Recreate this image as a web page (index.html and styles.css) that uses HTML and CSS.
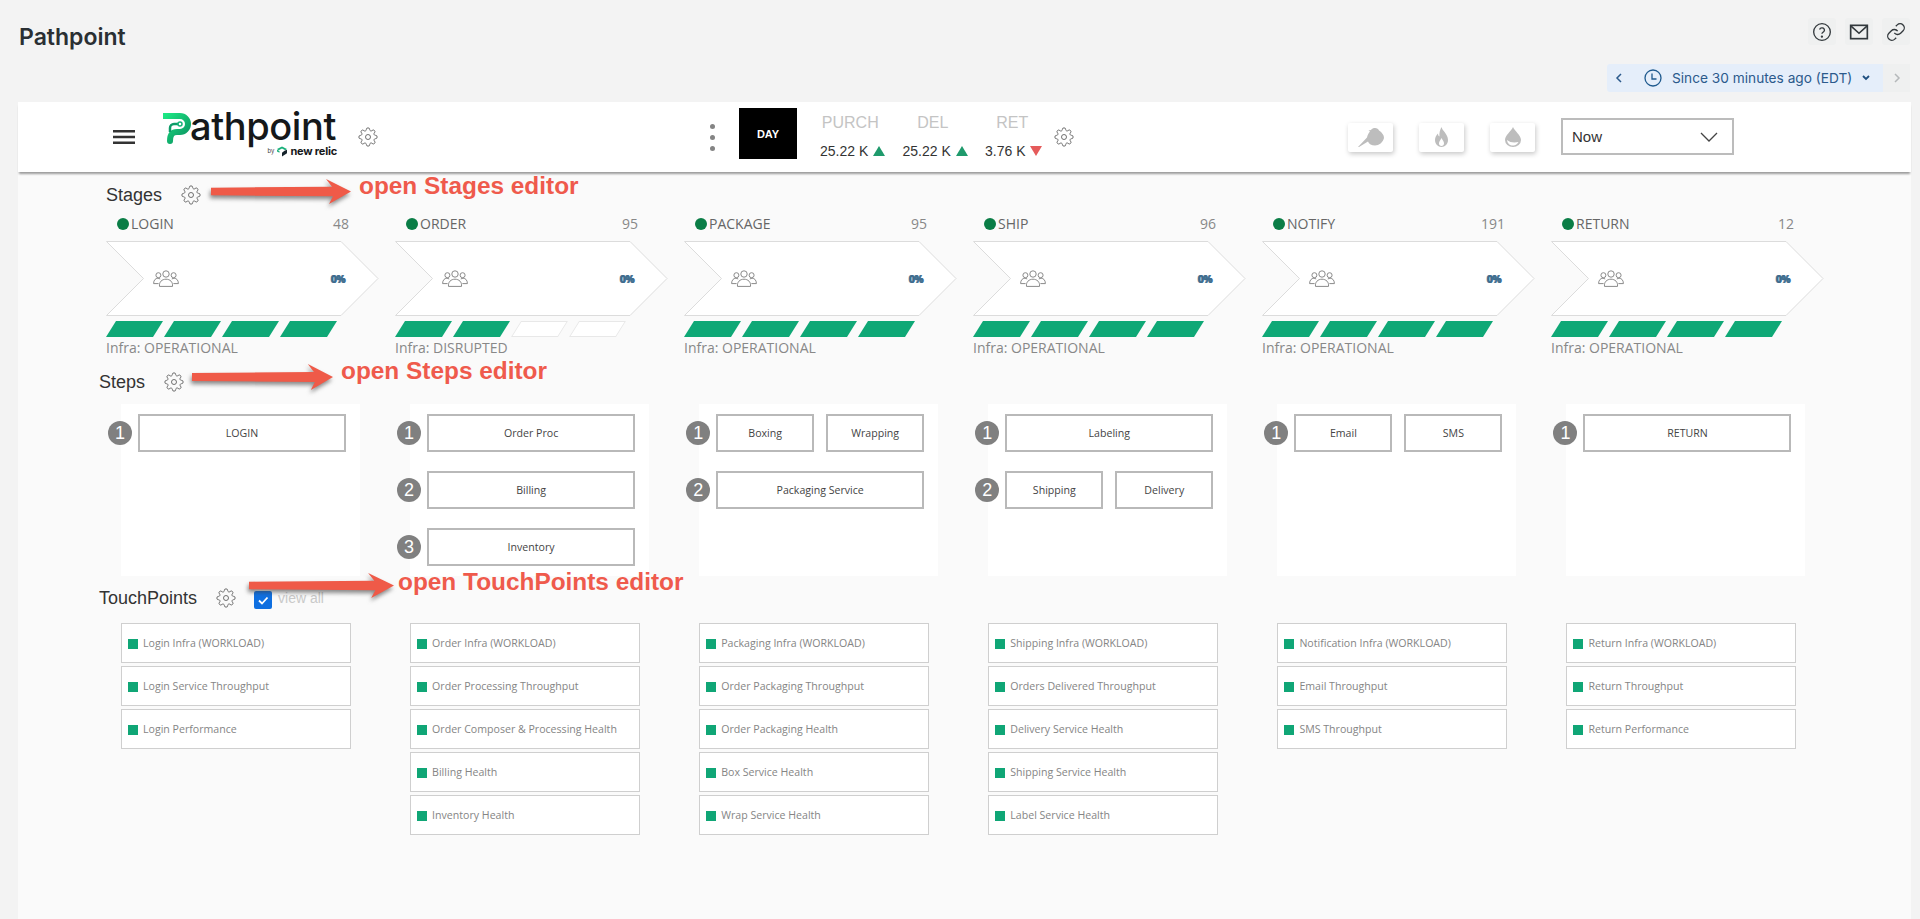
FILE: index.html
```html
<!DOCTYPE html>
<html lang="en">
<head>
<meta charset="utf-8">
<title>Pathpoint</title>
<link rel="stylesheet" href="styles.css">
</head>
<body>
<svg class="defs" width="0" height="0" aria-hidden="true">
  <symbol id="gear" viewBox="0 0 24 24"><circle cx="12" cy="12" r="3"/><path d="M19.4 15a1.65 1.65 0 0 0 .33 1.82l.06.06a2 2 0 0 1 0 2.83 2 2 0 0 1-2.83 0l-.06-.06a1.65 1.65 0 0 0-1.82-.33 1.65 1.65 0 0 0-1 1.51V21a2 2 0 0 1-2 2 2 2 0 0 1-2-2v-.09A1.65 1.65 0 0 0 9 19.4a1.65 1.65 0 0 0-1.82.33l-.06.06a2 2 0 0 1-2.83 0 2 2 0 0 1 0-2.83l.06-.06a1.65 1.65 0 0 0 .33-1.82 1.65 1.65 0 0 0-1.51-1H3a2 2 0 0 1-2-2 2 2 0 0 1 2-2h.09A1.65 1.65 0 0 0 4.6 9a1.65 1.65 0 0 0-.33-1.82l-.06-.06a2 2 0 0 1 0-2.83 2 2 0 0 1 2.83 0l.06.06a1.65 1.65 0 0 0 1.82.33H9a1.65 1.65 0 0 0 1-1.51V3a2 2 0 0 1 2-2 2 2 0 0 1 2 2v.09a1.65 1.65 0 0 0 1 1.51 1.65 1.65 0 0 0 1.82-.33l.06-.06a2 2 0 0 1 2.83 0 2 2 0 0 1 0 2.83l-.06.06a1.65 1.65 0 0 0-.33 1.82V9a1.65 1.65 0 0 0 1.51 1H21a2 2 0 0 1 2 2 2 2 0 0 1-2 2h-.09a1.65 1.65 0 0 0-1.51 1z"/></symbol>
  <symbol id="users" viewBox="0 0 26 17"><circle cx="13" cy="4" r="3.2"/><path d="M6.5 16.4c-.6-4.4 2.4-7.2 6.5-7.2s7.100 2.800 6.500 7.200z"/><circle cx="5.400" cy="5.200" r="2.500"/><path d="M7.200 9c-1-.5-1.600-.7-2.400-.7C2.600 8.300.6 10 .6 13.600h5"/><circle cx="20.600" cy="5.200" r="2.500"/><path d="M18.800 9c1-.5 1.600-.7 2.400-.7 2.200 0 4.200 1.700 4.200 5.300h-5"/></symbol>
  <symbol id="arrow" viewBox="0 0 140 26" preserveAspectRatio="none"><polygon points="0,9 121,8 115,0 140,13 118,26 122,18 0,17"/></symbol>
  <symbol id="chev" viewBox="0 0 273 75"><polygon points="0.500,0.500 235,0.500 272,37.500 235,74.500 0.500,74.500 37.500,37.500"/></symbol>
</svg>

<header class="top">
  <h1 class="title">Pathpoint</h1>
  <div class="top-right">
    <div class="actions">
      <span class="act"><svg class="ic-act" viewBox="0 0 24 24"><circle cx="12" cy="12" r="10"/><path d="M9.090 9a3 3 0 0 1 5.830 1c0 2-3 2.500-3 4"/><circle class="dot-fill" cx="11.900" cy="17.500" r=".6"/></svg></span>
      <span class="act"><svg class="ic-act ic-mail" viewBox="0 0 24 24"><rect x="2" y="4" width="20" height="16"/><path d="M2.500 5l9.500 8.500L21.500 5"/></svg></span>
      <span class="act"><svg class="ic-act ic-link" viewBox="0 0 24 24"><path d="M10 13a5 5 0 0 0 7.540.54l3-3a5 5 0 0 0-7.070-7.070l-1.720 1.710"/><path d="M14 11a5 5 0 0 0-7.540-.54l-3 3a5 5 0 0 0 7.070 7.070l1.710-1.710"/></svg></span>
    </div>
    <div class="time">
      <div class="time-main">
        <svg class="ic-chev-l" viewBox="0 0 8 12"><path d="M6 2L2 6l4 4"/></svg>
        <svg class="ic-clock" viewBox="0 0 18 18"><circle cx="9" cy="9" r="8"/><path d="M8 4.500V10h4.500"/></svg>
        <span class="time-text">Since 30 minutes ago (EDT)</span>
        <svg class="ic-chev-d" viewBox="0 0 10 8"><path d="M2 2l3 3 3-3"/></svg>
      </div>
      <div class="time-next"><svg class="ic-chev-r" viewBox="0 0 8 12"><path d="M2 2l4 4-4 4"/></svg></div>
    </div>
  </div>
</header>

<main class="panel">
  <section class="bar">
    <svg class="ic-burger" viewBox="0 0 22 14"><path d="M0 1.300h22M0 7h22M0 12.700h22"/></svg>
    <div class="logo">
      <div class="logo-main">
        <svg class="logo-mark" viewBox="0 0 28 32">
          <defs><linearGradient id="lg" x1="0" y1="0" x2="1" y2="1"><stop offset="0" stop-color="#1ce783"/><stop offset="1" stop-color="#0b8f60"/></linearGradient></defs>
          <path class="mark-stroke" d="M1 4h16a8 8 0 0 1 0 16h-3c-5 0-7 3-7 9"/>
          <path class="mark-thin" d="M7 20v-4a4 4 0 0 1 4-4h5"/>
          <circle class="mark-dot" cx="17" cy="12" r="2"/>
        </svg>
        <span class="logo-text">athpoint</span>
      </div>
      <div class="logo-sub">
        <span class="logo-by">by</span>
        <svg class="nr-mark" viewBox="0 0 12 12"><path class="nr-g" d="M0 3l6-3 6 3-2 1.500L6 2.500 2 4.500z"/><path class="nr-g" d="M0 4l3 1.500v2L0 6z"/><path class="nr-d" d="M9 5l3-1v4l-6 4V7.500z"/></svg>
        <span class="logo-nr">new relic</span>
      </div>
    </div>
    <svg class="gear gear-logo"><use href="#gear"/></svg>
    <div class="dots"><i></i><i></i><i></i></div>
    <div class="day">DAY</div>
    <div class="kpis">
      <div class="kpi"><div class="kpi-name">PURCH</div><div class="kpi-val">25.22 K<span class="tri up"></span></div></div>
      <div class="kpi"><div class="kpi-name">DEL</div><div class="kpi-val">25.22 K<span class="tri up"></span></div></div>
      <div class="kpi kpi-last"><div class="kpi-name">RET</div><div class="kpi-val">3.76 K<span class="tri down"></span></div></div>
    </div>
    <svg class="gear gear-kpi"><use href="#gear"/></svg>
    <div class="filters">
      <span class="fbtn"><svg class="ic-bird" viewBox="0 0 26 20"><path d="M0 20L9 10.500c.5-2.500 1.500-4.500 3-6L10.500 3.500 13 3c1-1.500 2.500-2 4-2 2 0 3.500 1 4 2.500 3 2 5 4.500 5 7.500-1 4.500-5 7.500-9 7.500-3.500 0-6-1.500-7-4L1 20z"/></svg></span>
      <span class="fbtn"><svg class="ic-flame" viewBox="0 0 13 20"><path fill-rule="evenodd" d="M6.500 0C7 3.500 13 7 13 13c0 4-3 7-6.500 7S0 17 0 13c0-3 1.500-5 3-6.500C3 8 3.500 9 4.500 9.500 4 6 5 3 6.500 0zm0 11C5.500 13 4 14.500 4 16.500 4 18 5 19 6.500 19S9 18 9 16.500C9 14.500 7.500 13 6.500 11z"/></svg></span>
      <span class="fbtn"><svg class="ic-drop" viewBox="0 0 16 20"><path fill-rule="evenodd" d="M8 0c1.500 4 8 8 8 13a8 7 0 0 1-16 0C0 8 6.500 4 8 0zM2 13c.5 4 3.500 6 7 5.500 2-.5 3.500-1.500 4.500-3.500-4.500 1-8.500.5-11.500-2z"/></svg></span>
      <div class="select"><span>Now</span><svg class="ic-select" viewBox="0 0 18 10"><path d="M1 1l8 8 8-8"/></svg></div>
    </div>
  </section>

  <section class="head head-stages">
    <h2 class="head-label">Stages</h2>
    <svg class="gear gear-head"><use href="#gear"/></svg>
  </section>

  <section class="stages">
    <div class="stage">
      <div class="stage-top"><span class="stage-name"><i class="status"></i>LOGIN</span><span class="stage-count">48</span></div>
      <div class="chev"><svg class="chev-bg"><use href="#chev"/></svg><svg class="ic-users"><use href="#users"/></svg><span class="pct">0%</span></div>
      <div class="bars"><i class="seg"></i><i class="seg"></i><i class="seg"></i><i class="seg"></i></div>
      <div class="infra">Infra: OPERATIONAL</div>
    </div>
    <div class="stage">
      <div class="stage-top"><span class="stage-name"><i class="status"></i>ORDER</span><span class="stage-count">95</span></div>
      <div class="chev"><svg class="chev-bg"><use href="#chev"/></svg><svg class="ic-users"><use href="#users"/></svg><span class="pct">0%</span></div>
      <div class="bars"><i class="seg"></i><i class="seg"></i><i class="seg off"></i><i class="seg off"></i></div>
      <div class="infra">Infra: DISRUPTED</div>
    </div>
    <div class="stage">
      <div class="stage-top"><span class="stage-name"><i class="status"></i>PACKAGE</span><span class="stage-count">95</span></div>
      <div class="chev"><svg class="chev-bg"><use href="#chev"/></svg><svg class="ic-users"><use href="#users"/></svg><span class="pct">0%</span></div>
      <div class="bars"><i class="seg"></i><i class="seg"></i><i class="seg"></i><i class="seg"></i></div>
      <div class="infra">Infra: OPERATIONAL</div>
    </div>
    <div class="stage">
      <div class="stage-top"><span class="stage-name"><i class="status"></i>SHIP</span><span class="stage-count">96</span></div>
      <div class="chev"><svg class="chev-bg"><use href="#chev"/></svg><svg class="ic-users"><use href="#users"/></svg><span class="pct">0%</span></div>
      <div class="bars"><i class="seg"></i><i class="seg"></i><i class="seg"></i><i class="seg"></i></div>
      <div class="infra">Infra: OPERATIONAL</div>
    </div>
    <div class="stage">
      <div class="stage-top"><span class="stage-name"><i class="status"></i>NOTIFY</span><span class="stage-count">191</span></div>
      <div class="chev"><svg class="chev-bg"><use href="#chev"/></svg><svg class="ic-users"><use href="#users"/></svg><span class="pct">0%</span></div>
      <div class="bars"><i class="seg"></i><i class="seg"></i><i class="seg"></i><i class="seg"></i></div>
      <div class="infra">Infra: OPERATIONAL</div>
    </div>
    <div class="stage">
      <div class="stage-top"><span class="stage-name"><i class="status"></i>RETURN</span><span class="stage-count">12</span></div>
      <div class="chev"><svg class="chev-bg"><use href="#chev"/></svg><svg class="ic-users"><use href="#users"/></svg><span class="pct">0%</span></div>
      <div class="bars"><i class="seg"></i><i class="seg"></i><i class="seg"></i><i class="seg"></i></div>
      <div class="infra">Infra: OPERATIONAL</div>
    </div>
  </section>

  <section class="head head-steps">
    <h2 class="head-label">Steps</h2>
    <svg class="gear gear-head"><use href="#gear"/></svg>
  </section>

  <section class="steps">
    <div class="step-col">
      <div class="step-row"><span class="badge">1</span><div class="boxes"><div class="box">LOGIN</div></div></div>
    </div>
    <div class="step-col">
      <div class="step-row"><span class="badge">1</span><div class="boxes"><div class="box">Order Proc</div></div></div>
      <div class="step-row"><span class="badge">2</span><div class="boxes"><div class="box">Billing</div></div></div>
      <div class="step-row"><span class="badge">3</span><div class="boxes"><div class="box">Inventory</div></div></div>
    </div>
    <div class="step-col">
      <div class="step-row"><span class="badge">1</span><div class="boxes"><div class="box">Boxing</div><div class="box">Wrapping</div></div></div>
      <div class="step-row"><span class="badge">2</span><div class="boxes"><div class="box">Packaging Service</div></div></div>
    </div>
    <div class="step-col">
      <div class="step-row"><span class="badge">1</span><div class="boxes"><div class="box">Labeling</div></div></div>
      <div class="step-row"><span class="badge">2</span><div class="boxes"><div class="box">Shipping</div><div class="box">Delivery</div></div></div>
    </div>
    <div class="step-col">
      <div class="step-row"><span class="badge">1</span><div class="boxes"><div class="box">Email</div><div class="box">SMS</div></div></div>
    </div>
    <div class="step-col">
      <div class="step-row"><span class="badge">1</span><div class="boxes"><div class="box">RETURN</div></div></div>
    </div>
  </section>

  <section class="head head-tp">
    <h2 class="head-label">TouchPoints</h2>
    <svg class="gear gear-head gear-tp"><use href="#gear"/></svg>
    <span class="check"><svg viewBox="0 0 18 18"><path d="M5 9.500l3 3 5.500-6"/></svg></span>
    <span class="view-all">view all</span>
  </section>

  <section class="tps">
    <ul class="tp-col">
      <li class="tp">Login Infra (WORKLOAD)</li>
      <li class="tp">Login Service Throughput</li>
      <li class="tp">Login Performance</li>
    </ul>
    <ul class="tp-col">
      <li class="tp">Order Infra (WORKLOAD)</li>
      <li class="tp">Order Processing Throughput</li>
      <li class="tp">Order Composer &amp; Processing Health</li>
      <li class="tp">Billing Health</li>
      <li class="tp">Inventory Health</li>
    </ul>
    <ul class="tp-col">
      <li class="tp">Packaging Infra (WORKLOAD)</li>
      <li class="tp">Order Packaging Throughput</li>
      <li class="tp">Order Packaging Health</li>
      <li class="tp">Box Service Health</li>
      <li class="tp">Wrap Service Health</li>
    </ul>
    <ul class="tp-col">
      <li class="tp">Shipping Infra (WORKLOAD)</li>
      <li class="tp">Orders Delivered Throughput</li>
      <li class="tp">Delivery Service Health</li>
      <li class="tp">Shipping Service Health</li>
      <li class="tp">Label Service Health</li>
    </ul>
    <ul class="tp-col">
      <li class="tp">Notification Infra (WORKLOAD)</li>
      <li class="tp">Email Throughput</li>
      <li class="tp">SMS Throughput</li>
    </ul>
    <ul class="tp-col">
      <li class="tp">Return Infra (WORKLOAD)</li>
      <li class="tp">Return Throughput</li>
      <li class="tp">Return Performance</li>
    </ul>
  </section>
</main>

<svg class="anno-arrow arrow-stages"><use href="#arrow"/></svg>
<div class="anno-text text-stages">open Stages editor</div>
<svg class="anno-arrow arrow-steps"><use href="#arrow"/></svg>
<div class="anno-text text-steps">open Steps editor</div>
<svg class="anno-arrow arrow-tp"><use href="#arrow"/></svg>
<div class="anno-text text-tp">open TouchPoints editor</div>
</body>
</html>
```

FILE: styles.css
```css
* { box-sizing: border-box; }
html, body { margin: 0; padding: 0; }
body {
  position: relative;
  width: 1920px;
  height: 919px;
  overflow: hidden;
  display: flex;
  flex-direction: column;
  background: #f3f3f3;
  font-family: "Liberation Sans", Arial, sans-serif;
  color: #333;
}
.defs { position: absolute; }

/* top strip */
.top {
  flex: 0 0 102px;
  display: flex;
  justify-content: space-between;
  align-items: flex-start;
  padding: 18px 10px 0 19px;
}
.title {
  margin: 4px 0 0;
  font: 600 23px/30px Inter, sans-serif;
  color: #2a2f33;
}
.top-right { display: flex; flex-direction: column; align-items: flex-end; }
.actions { display: flex; gap: 9px; }
.act {
  width: 28px;
  height: 27px;
  display: flex;
  align-items: center;
  justify-content: center;
  background: #eff0f0;
  border-radius: 3px;
}
.ic-act { width: 20px; height: 20px; fill: none; stroke: #33393d; stroke-width: 1.600; }
.ic-mail { stroke-width: 2; }
.dot-fill { fill: #33393d; }
.time { display: flex; margin-top: 19px; height: 28px; }
.time-main {
  width: 276px;
  display: flex;
  align-items: center;
  background: #e5eefa;
  border-radius: 3px 0 0 3px;
  padding-left: 8px;
  color: #2b5a8c;
}
.ic-chev-l { width: 8px; height: 12px; fill: none; stroke: #2b5a8c; stroke-width: 1.500; }
.ic-clock { width: 18px; height: 18px; margin-left: 21px; fill: none; stroke: #1f5a8e; stroke-width: 1.300; }
.time-text { margin-left: 10px; font: 400 13.700px/20px Inter, sans-serif; white-space: nowrap; }
.ic-chev-d { width: 10px; height: 8px; margin-left: 9px; fill: none; stroke: #1f4f80; stroke-width: 1.800; }
.time-next {
  width: 27px;
  display: flex;
  align-items: center;
  justify-content: center;
  background: #eff0f0;
}
.ic-chev-r { width: 8px; height: 12px; fill: none; stroke: #b5b8ba; stroke-width: 1.500; }

/* panel */
.panel {
  flex: 1;
  margin: 0 9px 0 18px;
  background: #fafafa;
}
.bar {
  position: relative;
  height: 70px;
  display: flex;
  align-items: center;
  padding-left: 95px;
  background: #fff;
  box-shadow: 0 3px 2px -1px rgba(0, 0, 0, .38);
}
.ic-burger { width: 22px; height: 14px; fill: none; stroke: #333; stroke-width: 2.500; }
.logo { margin-left: 28px; width: 174px; margin-bottom: 4px; }
.logo-main { display: flex; align-items: flex-start; height: 30px; }
.logo-mark { width: 28px; height: 32px; flex: none; fill: none; }
.mark-stroke { stroke: url(#lg); stroke-width: 6; stroke-linecap: round; stroke-linejoin: round; fill: none; }
.mark-thin { stroke: #0e9c68; stroke-width: 2.500; fill: none; }
.mark-dot { stroke: #14b377; stroke-width: 1.500; fill: #fff; }
.logo-text {
  margin-left: -1px;
  font: 500 38px/28px Inter, sans-serif;
  color: #15181a;
  letter-spacing: -.4px;
  white-space: nowrap;
}
.logo-sub {
  display: flex;
  align-items: center;
  justify-content: flex-end;
  height: 14px;
  margin-top: 2px;
  gap: 3px;
}
.logo-by { font: 400 6px/10px Inter, sans-serif; color: #444; }
.nr-mark { width: 10px; height: 11px; }
.nr-g { fill: #19b07a; }
.nr-d { fill: #16232b; }
.logo-nr { font: 700 11px/14px Inter, sans-serif; color: #15181a; letter-spacing: -.2px; }
.gear { fill: none; stroke: #555; stroke-width: 1; flex: none; }
.gear-logo { width: 20px; height: 20px; margin-left: 21px; }
.dots { margin-left: 332px; display: flex; flex-direction: column; gap: 6px; }
.dots i { display: block; width: 5px; height: 5px; border-radius: 50%; background: #848484; }
.day {
  margin: 0 0 7px 24px;
  width: 58px;
  height: 51px;
  display: flex;
  align-items: center;
  justify-content: center;
  background: #000;
  color: #fff;
  font: 700 11px/14px "Liberation Sans", Arial, sans-serif;
}
.kpis { margin: 0 0 2px 23px; display: flex; gap: 17px; }
.kpi { width: 65.500px; white-space: nowrap; }
.kpi-name {
  padding-right: 5px;
  text-align: center;
  font-size: 16px;
  line-height: 24px;
  color: #c4c4c4;
}
.kpi-last .kpi-name { padding-right: 11px; }
.kpi-val {
  display: flex;
  align-items: center;
  margin-top: 6px;
  font-size: 14px;
  line-height: 20px;
  color: #333;
}
.tri { width: 0; height: 0; margin-left: 5px; border-left: 6px solid transparent; border-right: 6px solid transparent; }
.tri.up { border-bottom: 10px solid #1f9a6c; }
.tri.down { border-top: 10px solid #e55b5b; }
.gear-kpi { width: 20px; height: 20px; margin-left: 3px; }
.filters { margin-left: auto; padding-right: 177px; display: flex; align-items: center; }
.fbtn {
  width: 45px;
  height: 29px;
  margin-right: 26px;
  display: flex;
  align-items: center;
  justify-content: center;
  background: #fff;
  border-radius: 2px;
  box-shadow: 1px 2px 5px rgba(0, 0, 0, .22);
}
.fbtn svg { fill: #bdbdbd; height: 20px; }
.ic-bird { width: 26px; }
.ic-flame { width: 13px; }
.ic-drop { width: 16px; }
.select {
  width: 173px;
  height: 37px;
  margin-bottom: 1px;
  display: flex;
  align-items: center;
  justify-content: space-between;
  padding: 0 14px 0 9px;
  border: 2px solid #bcbcbc;
  background: #fff;
  font-size: 15px;
  color: #333;
}
.ic-select { width: 18px; height: 10px; fill: none; stroke: #444; stroke-width: 1.300; }

/* section headings */
.head { display: flex; align-items: center; margin: 0; }
.head-label { margin: 0; font-weight: 400; font-size: 18px; line-height: 24px; color: #333; }
.gear-head { width: 20px; height: 20px; margin-left: 19px; }
.head-stages { height: 42px; padding: 4px 0 0 88px; }
.head-steps { height: 45px; padding-left: 81px; }
.head-tp { height: 47px; padding: 0 0 3px 81px; }
.check {
  margin: 3px 0 0 18px;
  width: 18px;
  height: 18px;
  display: flex;
  background: #0f6fe0;
  border-radius: 2px;
}
.check svg { width: 18px; height: 18px; fill: none; stroke: #fff; stroke-width: 1.800; }
.view-all { margin-left: 6px; font-size: 14px; color: #c9c9c9; }

/* stages */
.stages { display: flex; padding-left: 88px; }
.stage { flex: 0 0 289px; }
.stage-top {
  width: 243px;
  height: 20px;
  margin-bottom: 7px;
  padding-left: 11px;
  display: flex;
  align-items: center;
  justify-content: space-between;
  font: 400 14px/20px "Open Sans", sans-serif;
  color: #666;
}
.stage-name { display: flex; align-items: center; gap: 2px; font-weight: 500; }
.status { width: 12px; height: 12px; border-radius: 50%; background: #0a7d46; }
.stage-count { color: #888; }
.chev {
  position: relative;
  width: 273px;
  height: 75px;
  display: flex;
  align-items: center;
  justify-content: space-between;
  padding: 0 34px 0 47px;
}
.chev-bg { position: absolute; inset: 0; width: 273px; height: 75px; fill: #fff; stroke: #dcdcdc; stroke-width: 1; }
.ic-users { position: relative; width: 26px; height: 17px; fill: none; stroke: #8a8a8a; stroke-width: 1; }
.pct {
  position: relative;
  font: 700 10px/12px "Open Sans", sans-serif;
  letter-spacing: -.3px;
  color: #3f6c8e;
  text-shadow: .6px 0 #3f6c8e, -.6px 0 #7f9fb8;
}
.bars { display: flex; gap: 11px; padding-left: 5px; margin-top: 5px; height: 16px; }
.seg { width: 47px; height: 16px; background: #0fa876; transform: skewX(-32deg); }
.seg.off { background: #fff; border: 1px solid #e8e8e8; }
.infra { font: 400 14px/22px "Open Sans", sans-serif; color: #888; white-space: nowrap; }

/* steps */
.steps { display: flex; gap: 50.100px; padding-left: 103px; height: 172px; }
.step-col {
  flex: 0 0 239px;
  display: flex;
  flex-direction: column;
  gap: 19px;
  padding-top: 10px;
  background: #fff;
}
.step-row { display: flex; align-items: center; gap: 6px; margin-left: -13px; }
.badge {
  flex: none;
  width: 24px;
  height: 24px;
  display: flex;
  align-items: center;
  justify-content: center;
  border-radius: 50%;
  background: #808080;
  color: #fff;
  font-size: 18px;
  line-height: 24px;
}
.boxes { width: 208px; display: flex; gap: 12px; }
.box {
  flex: 1;
  height: 38px;
  display: flex;
  align-items: center;
  justify-content: center;
  border: 2px solid #b9b9b9;
  background: #fff;
  font: 400 10.600px/14px "Open Sans", sans-serif;
  color: #444;
}

/* touchpoints */
.tps { display: flex; gap: 59.100px; padding-left: 103px; }
.tp-col {
  flex: 0 0 230px;
  margin: 0;
  padding: 0;
  list-style: none;
  display: flex;
  flex-direction: column;
  gap: 3px;
}
.tp {
  position: relative;
  height: 40px;
  display: flex;
  align-items: center;
  padding: 0 0 1px 21px;
  background: #fff;
  border: 1px solid #cfcfcf;
  font: 400 10.600px/14px "Open Sans", sans-serif;
  color: #858585;
  white-space: nowrap;
}
.tp::before {
  content: "";
  position: absolute;
  left: 6px;
  top: 15px;
  width: 10px;
  height: 10px;
  background: #10a676;
}

/* annotations over the screenshot */
.anno-arrow {
  position: absolute;
  fill: #ef5a48;
  filter: drop-shadow(-1px 3px 2px rgba(60, 60, 60, .6));
}
.arrow-stages { left: 211px; top: 179px; width: 140px; height: 25px; }
.arrow-steps { left: 192px; top: 364px; width: 141px; height: 26px; }
.arrow-tp { left: 249px; top: 573px; width: 145px; height: 25px; }
.anno-text {
  position: absolute;
  font-weight: 700;
  font-size: 24.400px;
  line-height: 26px;
  color: #ef5a4c;
  white-space: nowrap;
}
.text-stages { left: 359px; top: 173px; }
.text-steps { left: 341px; top: 358px; }
.text-tp { left: 398px; top: 569px; }
```
